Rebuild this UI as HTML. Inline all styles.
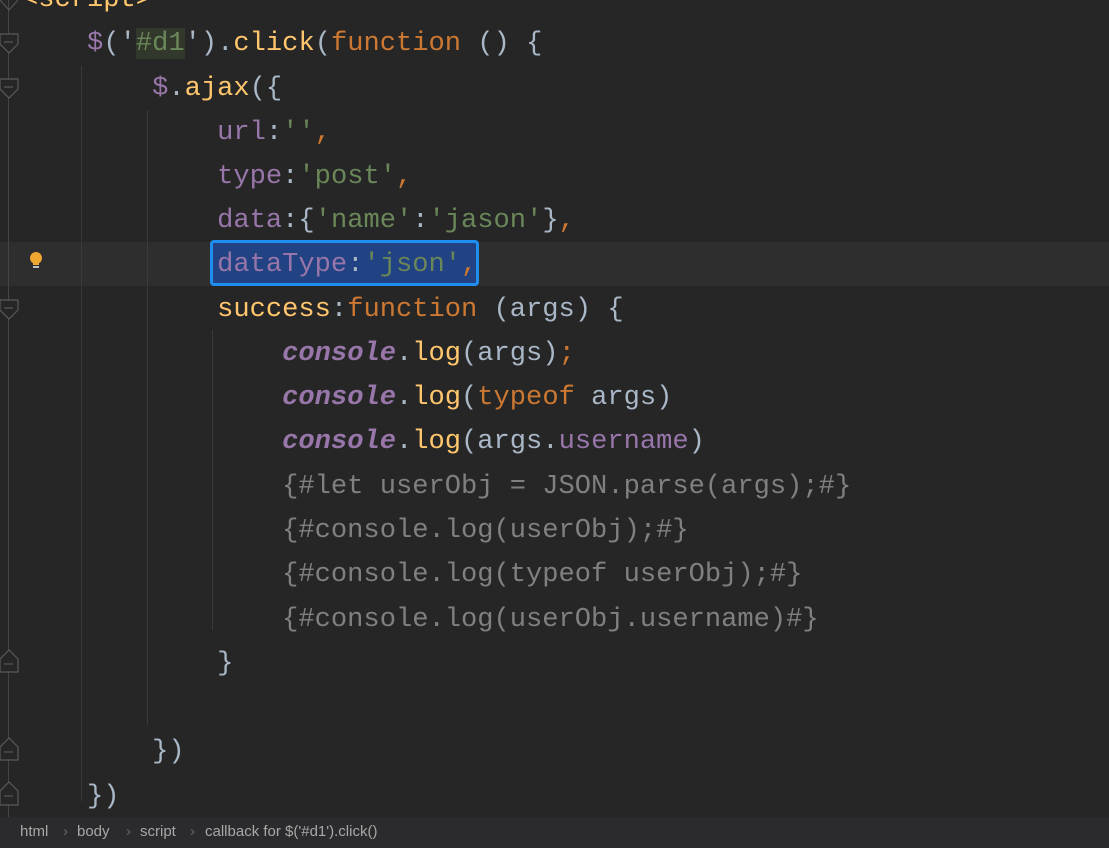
<!DOCTYPE html>
<html><head><meta charset="utf-8"><style>
html,body{margin:0;padding:0}
body{width:1109px;height:848px;background:#262626;position:relative;overflow:hidden;font-family:"Liberation Mono","DejaVu Sans Mono",monospace;}
.l{position:absolute;left:22px;height:44px;line-height:44px;font-size:27.1px;white-space:pre;color:#a9b7c6;}
.p{color:#9876aa}.s{color:#6a8759}.k{color:#cc7832}.f{color:#ffc66d}.c{color:#808080}.i{font-style:italic;font-weight:bold;color:#9876aa}
.g{position:absolute;width:1px;background:#3a3a3a}
</style></head><body>
<div style="position:absolute;left:0;top:242px;width:1109px;height:44px;background:#2e2e2e"></div>
<div style="position:absolute;left:8px;top:0;width:1px;height:817px;background:#444"></div>
<div class="g" style="left:81px;top:66px;height:735px"></div>
<div class="g" style="left:147px;top:110px;height:615px"></div>
<div class="g" style="left:212px;top:330px;height:300px"></div>
<div style="position:absolute;left:210px;top:240px;width:263px;height:40px;border:3px solid #1e8ff0;border-radius:4px;background:#214283"></div>
<svg style="position:absolute;left:0;top:0" width="20" height="817">
<g fill="#262626" stroke="#5a5a5a" stroke-width="1.2">
<path d="M0 34 H18 V44 L9 53 L0 44Z"/><path d="M4 42H13"/>
<path d="M0 79 H18 V89 L9 98 L0 89Z"/><path d="M4 87H13"/>
<path d="M0 300 H18 V310 L9 319 L0 310Z"/><path d="M4 308H13"/>
<path d="M9 650 L18 659 V672 H0 V659Z"/><path d="M4 664H13"/>
<path d="M9 738 L18 747 V760 H0 V747Z"/><path d="M4 752H13"/>
<path d="M9 782 L18 791 V805 H0 V791Z"/><path d="M4 796H13"/>
</g>
<path d="M0 0 L9 10 L18 0" fill="none" stroke="#5a5a5a"/>
</svg>
<svg style="position:absolute;left:28px;top:251px" width="16" height="20"><circle cx="8" cy="7" r="6" fill="#f0a732"/><rect x="5" y="12" width="6" height="2" fill="#f0a732"/><rect x="5" y="15" width="6" height="2" fill="#c0c0c0"/></svg>
<div class="l f" style="top:-22px">&lt;script&gt;</div>
<div class="l" style="top:22px">    <span class="p">$</span>('<span class="s" style="background:#32382c">#d1</span>').<span class="f">click</span>(<span class="k">function</span> () {</div>
<div class="l" style="top:67px">        <span class="p">$</span>.<span class="f">ajax</span>({</div>
<div class="l" style="top:111px">            <span class="p">url</span>:<span class="s">''</span><span class="k">,</span></div>
<div class="l" style="top:155px">            <span class="p">type</span>:<span class="s">'post'</span><span class="k">,</span></div>
<div class="l" style="top:199px">            <span class="p">data</span>:{<span class="s">'name'</span>:<span class="s">'jason'</span>}<span class="k">,</span></div>
<div class="l" style="top:243px">            <span class="p">dataType</span>:<span class="s">'json'</span><span class="k">,</span></div>
<div class="l" style="top:288px">            <span class="f">success</span>:<span class="k">function</span> (args) {</div>
<div class="l" style="top:332px">                <span class="i">console</span>.<span class="f">log</span>(args)<span class="k">;</span></div>
<div class="l" style="top:376px">                <span class="i">console</span>.<span class="f">log</span>(<span class="k">typeof</span> args)</div>
<div class="l" style="top:420px">                <span class="i">console</span>.<span class="f">log</span>(args.<span class="p">username</span>)</div>
<div class="l c" style="top:465px">                {#let userObj = JSON.parse(args);#}</div>
<div class="l c" style="top:509px">                {#console.log(userObj);#}</div>
<div class="l c" style="top:553px">                {#console.log(typeof userObj);#}</div>
<div class="l c" style="top:598px">                {#console.log(userObj.username)#}</div>
<div class="l" style="top:642px">            }</div>
<div class="l" style="top:730px">        })</div>
<div class="l" style="top:775px">    })</div>
<div style="position:absolute;left:0;top:817px;width:1109px;height:31px;background:#2b2b2d;font-family:'Liberation Sans',sans-serif;font-size:15px;color:#a8a8a8;line-height:29px">
<span style="position:absolute;left:20px">html</span><span style="position:absolute;left:63px;color:#666">›</span>
<span style="position:absolute;left:77px">body</span><span style="position:absolute;left:126px;color:#666">›</span>
<span style="position:absolute;left:140px">script</span><span style="position:absolute;left:190px;color:#666">›</span>
<span style="position:absolute;left:205px">callback for $('#d1').click()</span>
</div>
</body></html>
